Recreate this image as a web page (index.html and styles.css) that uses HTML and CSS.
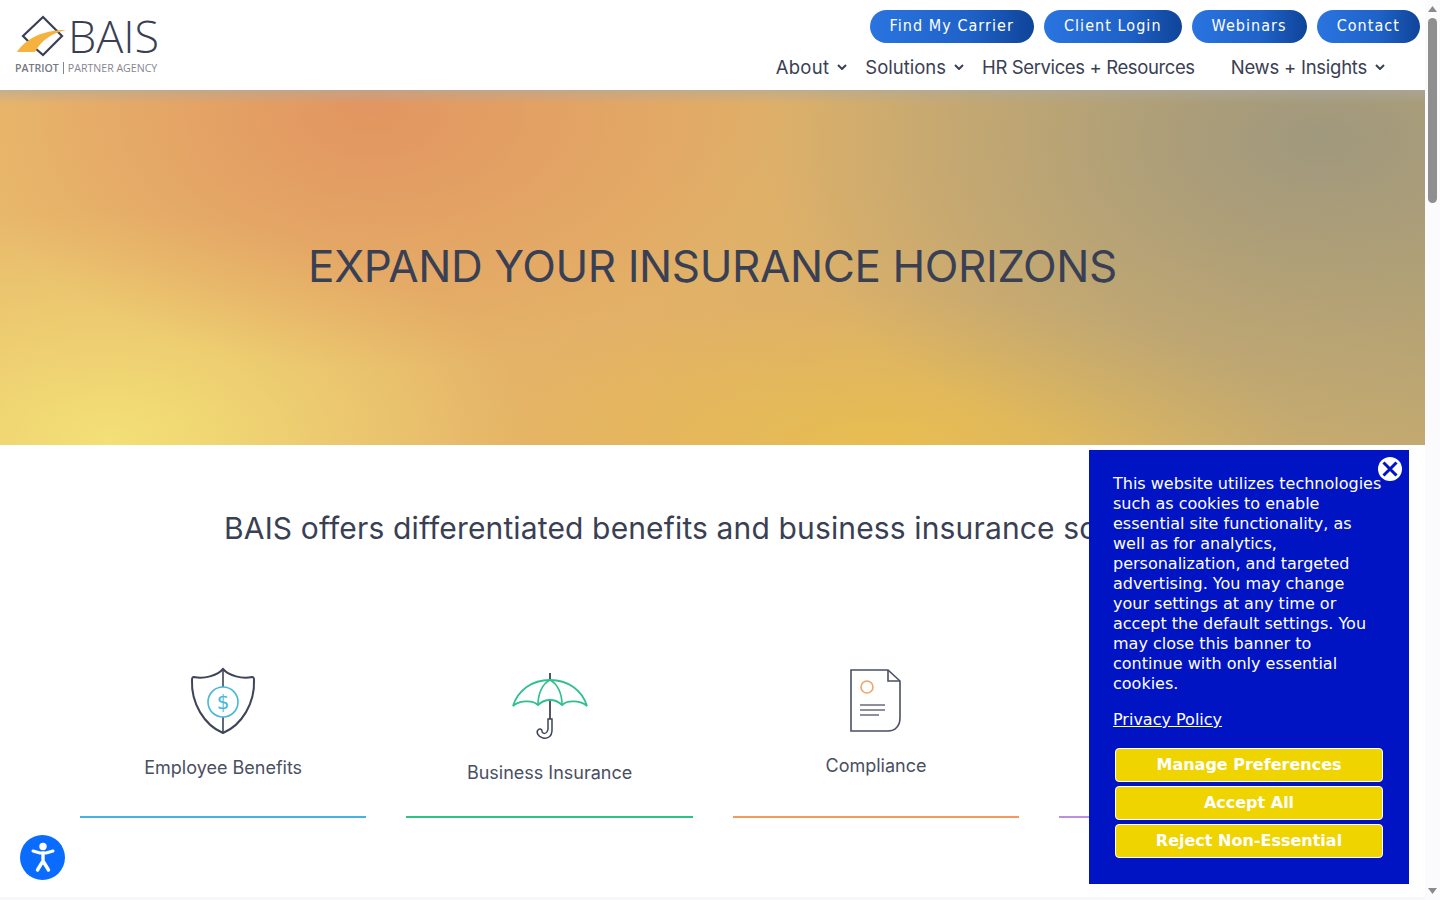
FILE: index.html
```html
<!DOCTYPE html>
<html>
<head>
    <title>BAIS - Patriot Partner Agency</title>
    <link rel="stylesheet" href="styles.css">
</head>
<body>
    <div id="page">
        <main id="content">
            <header id="siteHeader">
                <a class="logo" href="#">
                    <span class="logoTop">
                        <svg width="52" height="42" viewBox="0 0 52 42">
                            <path d="M20 33 L28 40 L47 21 L28 2 L8 21 L14 27" fill="none" stroke="#3a4054" stroke-width="2.2"/>
                            <path d="M2 37 C10 25 26 15 51 15 C38 18 26 25 20 37 Z" fill="#f5b23e"/>
                        </svg>
                        <span class="logoName">BAIS</span>
                    </span>
                    <span class="logoSub"><b>PATRIOT</b><i></i>PARTNER AGENCY</span>
                </a>
                <div class="headerRight">
                    <div class="pills">
                        <a class="pill" href="#">Find My Carrier</a>
                        <a class="pill" href="#">Client Login</a>
                        <a class="pill" href="#">Webinars</a>
                        <a class="pill" href="#">Contact</a>
                    </div>
                    <nav class="mainNav">
                        <a href="#" class="navAbout">About<svg class="chev" viewBox="0 0 10 6"><path d="M1 1 L5 5 L9 1"/></svg></a>
                        <a href="#" class="navSolutions">Solutions<svg class="chev" viewBox="0 0 10 6"><path d="M1 1 L5 5 L9 1"/></svg></a>
                        <a href="#" class="navHr">HR Services + Resources</a>
                        <a href="#" class="navNews">News + Insights<svg class="chev" viewBox="0 0 10 6"><path d="M1 1 L5 5 L9 1"/></svg></a>
                    </nav>
                </div>
            </header>

            <section id="hero">
                <h1>EXPAND YOUR INSURANCE HORIZONS</h1>
            </section>

            <section id="offers">
                <h2>BAIS offers differentiated benefits and business insurance solutions</h2>
                <div class="cards">
                    <a class="card blue" href="#">
                        <svg class="icon iconShield" width="66" height="68" viewBox="0 0 66 68">
                            <path d="M33 2 C27 9 14 12 4 10 C2 10 2 11 2 13 C1 36 14 58 33 66 C52 58 65 36 64 13 C64 11 64 10 62 10 C52 12 39 9 33 2 Z" fill="none" stroke="#3f4558" stroke-width="2"/>
                            <path d="M33 2 V20 M33 50 V66" fill="none" stroke="#3f4558" stroke-width="1.6"/>
                            <circle cx="33" cy="35" r="15" fill="none" stroke="#45b8d8" stroke-width="1.6"/>
                            <text x="33" y="42" text-anchor="middle" class="dollar">$</text>
                        </svg>
                        <span>Employee Benefits</span>
                    </a>
                    <a class="card green" href="#">
                        <svg class="icon iconUmbrella" width="76" height="68" viewBox="0 0 76 68">
                            <path d="M38 1 V8 M38 28 V47" fill="none" stroke="#3f4558" stroke-width="1.8"/>
                            <path d="M1 34 C6 18 20 8 38 8 C56 8 70 18 75 34 C70 29 56 27 50 33 C46 29 42 28 38 28 C34 28 30 29 26 33 C20 27 6 29 1 34 Z" fill="none" stroke="#2fc08c" stroke-width="1.8"/>
                            <path d="M38 8 C30 12 26 22 26 33 M38 8 C46 12 50 22 50 33" fill="none" stroke="#2fc08c" stroke-width="1.6"/>
                            <path d="M40 47 V58 C40 65 35 67 31 66 C26 65 24 60 26 58 C27 56 30 57 30 59 C30 62 35 63 36 57 V47 Z" fill="#fff" stroke="#3f4558" stroke-width="1.5"/>
                        </svg>
                        <span>Business Insurance</span>
                    </a>
                    <a class="card orange" href="#">
                        <svg class="icon iconDoc" width="52" height="64" viewBox="0 0 52 64">
                            <path d="M1 2 H38 L50 13 V50 C50 58 45 63 38 63 H1 Z" fill="none" stroke="#4a4f62" stroke-width="1.6"/>
                            <path d="M38 2 V13 H50" fill="none" stroke="#4a4f62" stroke-width="1.6"/>
                            <circle cx="17" cy="19" r="6" fill="none" stroke="#eda56a" stroke-width="1.6"/>
                            <path d="M10 37 H35 M10 42 H35 M10 47 H29" fill="none" stroke="#6a6e7e" stroke-width="1.5"/>
                        </svg>
                        <span>Compliance</span>
                    </a>
                    <div class="card purple"></div>
                </div>
            </section>
            <div class="nextBand"></div>
        </main>
        <aside id="scrollBar">
            <svg class="arrow" width="9" height="6" viewBox="0 0 9 6"><path d="M4.5 0 L9 6 H0 Z"/></svg>
            <div class="thumb"></div>
            <svg class="arrow arrowDown" width="9" height="6" viewBox="0 0 9 6"><path d="M0 0 H9 L4.5 6 Z"/></svg>
        </aside>
    </div>

    <a id="a11yButton" href="#">
        <svg width="26" height="32" viewBox="0 0 26 32">
            <circle cx="13" cy="4.5" r="3.7" fill="#fff"/>
            <path d="M3 9 L10 11 H16 L23 9" fill="none" stroke="#fff" stroke-width="3" stroke-linecap="round" stroke-linejoin="round"/>
            <path d="M13 11 V19 M13 19 L7.5 28 M13 19 L18.5 28" fill="none" stroke="#fff" stroke-width="3.4" stroke-linecap="round" stroke-linejoin="round"/>
        </svg>
    </a>

    <div id="cookieBanner">
        <button class="closeBtn" aria-label="Close">
            <svg width="24" height="24" viewBox="0 0 24 24">
                <circle cx="12" cy="12" r="12" fill="#fff"/>
                <path d="M5.5 5.5 L18.5 18.5 M18.5 5.5 L5.5 18.5" stroke="#0014c4" stroke-width="3"/>
            </svg>
        </button>
        <p>This website utilizes technologies such as cookies to enable essential site functionality, as well as for analytics, personalization, and targeted advertising. You may change your settings at any time or accept the default settings. You may close this banner to continue with only essential cookies.</p>
        <a class="policy" href="#">Privacy Policy</a>
        <div class="cookieButtons">
            <button class="cookieBtn">Manage Preferences</button>
            <button class="cookieBtn">Accept All</button>
            <button class="cookieBtn">Reject Non-Essential</button>
        </div>
    </div>
</body>
</html>
```

FILE: styles.css
```css
html, body {
    margin: 0;
    height: 900px;
    overflow: hidden;
}

body {
    font-family: Inter, sans-serif;
    color: #3a4054;
    background-color: #fff;
}

a {
    text-decoration: none;
    color: inherit;
}

#page {
    display: flex;
    height: 900px;
}

#content {
    width: 1425px;
    flex: none;
    display: flex;
    flex-direction: column;
}

/* header */
#siteHeader {
    height: 90px;
    flex: none;
    display: flex;
    justify-content: space-between;
    padding: 10px 5px 0 15px;
    box-sizing: border-box;
}

.logo {
    display: block;
    padding-top: 5px;
}

.logoTop {
    display: flex;
    align-items: center;
    height: 42px;
}

.logoName {
    font-family: "Open Sans", sans-serif;
    font-size: 45px;
    font-weight: 300;
    line-height: 42px;
    margin-left: 1px;
}

.logoSub {
    display: flex;
    align-items: center;
    margin-top: 5px;
    font-family: "Open Sans", sans-serif;
    font-size: 10.6px;
    line-height: 12px;
    color: #85878f;
}

.logoSub b {
    font-weight: 600;
    color: #76787f;
}

.logoSub i {
    width: 1px;
    height: 12px;
    background-color: #85878f;
    margin: 0 4px;
}

.headerRight {
    display: flex;
    flex-direction: column;
    align-items: flex-end;
}

.pills {
    display: flex;
    gap: 10px;
}

.pill {
    display: block;
    height: 33px;
    line-height: 32px;
    padding: 0 20px;
    border-radius: 17px;
    background: linear-gradient(to right, #2a74e0 0%, #1f62c8 60%, #0f4499 100%);
    color: #fff;
    font-family: "DejaVu Sans", sans-serif;
    font-size: 16px;
    font-stretch: condensed;
    letter-spacing: 1.05px;
}

.mainNav {
    display: flex;
    margin-top: 11px;
    padding-right: 35px;
    font-size: 18.5px;
    letter-spacing: -0.38px;
    line-height: 26px;
    color: #3a4054;
}

.mainNav a {
    display: flex;
    align-items: center;
}

.navAbout { letter-spacing: 0.3px; }
.navSolutions { margin-left: 18px; letter-spacing: 0; }
.navHr { margin-left: 18px; }
.navNews { margin-left: 36px; letter-spacing: -0.25px; }

.chev {
    width: 10px;
    height: 6px;
    margin-left: 8px;
    fill: none;
    stroke: #3a4054;
    stroke-width: 2;
}

/* hero */
#hero {
    height: 355px;
    flex: none;
    display: flex;
    justify-content: center;
    padding-top: 150px;
    box-sizing: border-box;
    background:
        linear-gradient(to bottom, rgba(170, 170, 165, 0.55) 0, rgba(170, 170, 165, 0) 14px),
        radial-gradient(ellipse 420px 260px at 370px 20px, rgba(226, 146, 96, 0.9), rgba(226, 146, 96, 0) 100%),
        radial-gradient(ellipse 560px 340px at 1320px 50px, rgba(160, 152, 125, 1), rgba(160, 152, 125, 0) 100%),
        radial-gradient(ellipse 420px 230px at 110px 350px, rgba(243, 224, 118, 1), rgba(243, 224, 118, 0) 100%),
        radial-gradient(ellipse 420px 150px at 880px 355px, rgba(232, 190, 80, 0.95), rgba(232, 190, 80, 0) 100%),
        linear-gradient(to right, #e8b96c 0%, #e3b167 45%, #d4b06c 75%, #c6ab6e 100%);
}

#hero h1 {
    margin: 0;
    font-size: 44px;
    font-weight: 400;
    letter-spacing: -0.4px;
    line-height: 52px;
    color: #3a4054;
    white-space: nowrap;
}

/* offers */
#offers {
    padding-top: 63px;
}

#offers h2 {
    margin: 0;
    padding-right: 9px;
    font-size: 30px;
    font-weight: 400;
    letter-spacing: 0.14px;
    line-height: 40px;
    text-align: center;
    white-space: nowrap;
}

.cards {
    display: grid;
    grid-template-columns: repeat(4, 286.4px);
    column-gap: 40px;
    padding-left: 80px;
    margin-top: 100px;
}

.card {
    height: 170px;
    box-sizing: border-box;
    display: flex;
    flex-direction: column;
    align-items: center;
    font-size: 18px;
    line-height: 24px;
    color: #4a4f62;
    border-bottom: 2px solid #000;
}

.card .icon { margin-bottom: 21px; }
.card .iconShield { margin-top: 19px; }
.card .iconUmbrella { margin-top: 24px; }
.card .iconDoc { margin-top: 20px; margin-bottom: 22px; }
.card.blue { border-color: #45b4e4; }
.card.green { border-color: #2cc482; }
.card.orange { border-color: #f59a5c; }
.card.purple { border-color: #c08ee0; }

.dollar {
    font-family: "DejaVu Sans", sans-serif;
    font-size: 20px;
    fill: #45b8d8;
}

.nextBand {
    margin-top: auto;
    height: 3px;
    background-color: #f7f7f9;
}

/* scrollbar */
#scrollBar {
    width: 15px;
    flex: none;
    background-color: #fbfbfd;
    display: flex;
    flex-direction: column;
    align-items: center;
    padding-top: 6px;
    box-sizing: border-box;
}

.arrow { fill: #8a8a8a; }

.thumb {
    width: 9px;
    height: 185px;
    margin-top: 6px;
    border-radius: 5px;
    background-color: #8f8f8f;
}

.arrowDown {
    margin-top: auto;
    margin-bottom: 6px;
}

/* floating things */
#a11yButton {
    position: fixed;
    left: 20px;
    top: 835px;
    width: 45px;
    height: 45px;
    border-radius: 50%;
    background-color: #0a6cff;
    display: flex;
    align-items: center;
    justify-content: center;
}

#cookieBanner {
    position: fixed;
    left: 1089px;
    top: 450px;
    width: 320px;
    height: 434px;
    box-sizing: border-box;
    padding: 24px 24px 0;
    background-color: #0014c4;
    color: #fff;
    font-family: "DejaVu Sans", sans-serif;
    font-size: 16px;
    line-height: 20px;
}

#cookieBanner p {
    margin: 0 0 16px;
    width: 270px;
}

.closeBtn {
    position: absolute;
    top: 7px;
    right: 7px;
    width: 24px;
    height: 24px;
    padding: 0;
    border: 0;
    background: none;
    display: block;
}

.policy {
    text-decoration: underline;
    color: #fff;
}

.cookieButtons {
    display: flex;
    flex-direction: column;
    gap: 4px;
    margin: 18px 2px 0;
}

.cookieBtn {
    height: 34px;
    width: 268px;
    border: 1px solid #fff;
    border-radius: 4px;
    background-color: #f0d400;
    color: #fff;
    font-family: "DejaVu Sans", sans-serif;
    font-size: 16px;
    font-weight: bold;
    padding: 0 0 2px;
}
```
